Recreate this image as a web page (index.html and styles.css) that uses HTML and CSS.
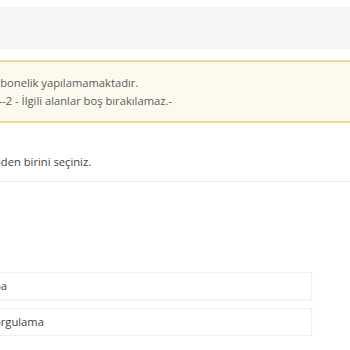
FILE: index.html
```html
<!DOCTYPE html>
<html lang="tr">
<head>
  <meta charset="UTF-8">
  <title>Abonelik</title>
  <link rel="stylesheet" href="styles.css">
</head>
<body>
  <div class="page">
    <div class="page-header"></div>

    <div class="alert">
      <div class="line">abonelik yapılamamaktadır.</div>
      <div class="line line-code">r--2 - İlgili alanlar boş bırakılamaz.-</div>
    </div>

    <div class="panel">
      <p class="panel-text">nden birini seçiniz.</p>
    </div>

    <ul class="options">
      <li class="option">ba</li>
      <li class="option">orgulama</li>
    </ul>
  </div>
</body>
</html>
```

FILE: styles.css
```css
:root {
  --text: #555;
  --header-bg: #f4f5f7;
  --alert-bg: #fef9ef;
  --alert-border: #f5d592;
  --rule: #ececec;
}
body {
  margin: 0;
  font-family: 'Open Sans', sans-serif;
  font-size: 11.2px;
  line-height: 17.5px;
  color: var(--text);
  background: #fff;
  overflow: hidden;
}
.page {
  padding-top: 7px;
}
.page-header {
  height: 42px;
  background: var(--header-bg);
}
.alert {
  margin-top: 11px;
  padding: 12px 0 12px 0;
  background: var(--alert-bg);
  border-top: 2px solid var(--alert-border);
  border-bottom: 2px solid var(--alert-border);
}
.line {
  margin-left: -6px;
  color: #5b5b5b;
}
.panel {
  margin-top: 30px;
  border-bottom: 1px solid var(--rule);
}
.panel-text {
  margin: 0 0 10px -6px;
  color: #444;
}
.options {
  list-style: none;
  margin: 90px 0 0 0;
  padding: 0;
  width: 312px;
  display: flex;
  flex-direction: column;
  gap: 8px;
}
.option {
  height: 26px;
  line-height: 26px;
  padding-left: 0;
  text-indent: -6px;
  border: 1px solid #f0f0f0;
  border-left: none;
  box-shadow: 0 1px 2px rgba(0,0,0,0.04);
  color: #444;
}
```
